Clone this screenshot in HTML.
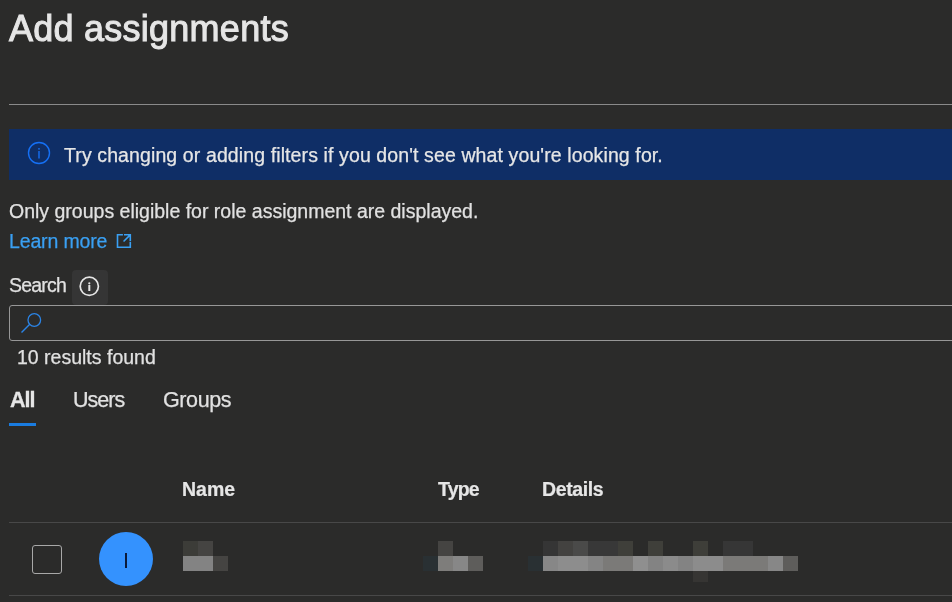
<!DOCTYPE html>
<html><head><meta charset="utf-8">
<style>
html,body{margin:0;padding:0;}
body{width:952px;height:602px;overflow:hidden;background:#2b2b2a;position:relative;font-family:"Liberation Sans",sans-serif;color:#e1e1e1;}
.a{position:absolute;white-space:nowrap;line-height:1;}
.t{font-size:36px;color:#e6e6e6;-webkit-text-stroke:1px #e6e6e6;letter-spacing:0.25px;}

.line{position:absolute;height:1px;left:9px;right:0;}
.banner{position:absolute;left:9px;right:0;top:129px;height:51px;background:#0f2e66;}
.txt{font-size:19.5px;-webkit-text-stroke:0.25px currentColor;}
.a{will-change:transform;}
.a.sb{font-weight:bold;-webkit-text-stroke:0.2px currentColor;}
.blk{position:absolute;width:15px;height:15px;}
</style></head><body>
<div class="a t" id="title" style="left:9px;top:11px;">Add assignments</div>
<div class="line" style="top:104px;background:#8a8a8a;"></div>
<div class="banner"></div>
<svg class="a" style="left:27px;top:141px" width="24" height="24" viewBox="0 0 24 24">
<circle cx="12" cy="12" r="10.5" fill="none" stroke="#1570f5" stroke-width="1.4"/>
<rect x="11.3" y="10" width="1.4" height="7.5" fill="#1570f5"/>
<circle cx="12" cy="7.8" r="0.9" fill="#1570f5"/>
</svg>
<div class="a txt" id="bantxt" style="left:64px;top:146px;letter-spacing:0.11px;color:#e6e6e6;">Try changing or adding filters if you don't see what you're looking for.</div>
<div class="a txt" id="only" style="left:9px;top:202px;">Only groups eligible for role assignment are displayed.</div>
<div class="a txt" id="learn" style="left:9px;top:232px;letter-spacing:-0.15px;color:#3aa0f3;">Learn more</div>
<svg class="a" style="left:116px;top:233px" width="16" height="16" viewBox="0 0 16 16">
<path d="M6.9 1.8H1.5V14.2H14.3V8.8" fill="none" stroke="#3aa0f3" stroke-width="1.6"/>
<path d="M8 1V2.6H12.4L7 8L8.1 9.1L13.5 3.7V8H15.1V1Z" fill="#3aa0f3"/>
</svg>
<div class="a txt" id="search" style="left:9px;top:276px;letter-spacing:-0.8px;">Search</div>
<div class="a" style="left:72px;top:270px;width:36px;height:35px;background:#353535;border-radius:4px;"></div>
<svg class="a" style="left:78px;top:275px" width="22" height="22" viewBox="0 0 22 22">
<circle cx="11.3" cy="11.3" r="9.1" fill="none" stroke="#e6e6e6" stroke-width="1.7"/>
<rect x="10.3" y="10" width="2" height="6" fill="#e6e6e6"/>
<circle cx="11.3" cy="8.3" r="1.1" fill="#e6e6e6"/>
</svg>
<div class="a" style="left:9px;top:305px;width:960px;height:34px;border:1px solid #979797;border-radius:3px;"></div>
<svg class="a" style="left:18px;top:310px" width="26" height="26" viewBox="0 0 26 26">
<circle cx="16.3" cy="10" r="6.3" fill="none" stroke="#2b84e6" stroke-width="1.3"/>
<path d="M12 14L3.5 22.5" stroke="#2b84e6" stroke-width="1.4"/>
</svg>
<div class="a txt" id="res" style="left:17px;top:348px;">10 results found</div>
<div class="a" id="all" style="left:10px;top:390px;font-size:21.5px;font-weight:bold;letter-spacing:-1px;-webkit-text-stroke:0.3px #e6e6e6;color:#e6e6e6;">All</div>
<div class="a" id="users" style="-webkit-text-stroke:0.25px #e1e1e1;left:73px;top:390px;font-size:21.5px;letter-spacing:-1px;color:#e1e1e1;">Users</div>
<div class="a" id="groups" style="-webkit-text-stroke:0.25px #e1e1e1;left:163px;top:390px;font-size:21.5px;letter-spacing:-0.4px;color:#e1e1e1;">Groups</div>
<div class="a" style="left:9px;top:423px;width:27px;height:3px;background:#1a7ce0;"></div>
<div class="a txt sb" id="hname" style="left:182px;top:480px;color:#e6e6e6;">Name</div>
<div class="a txt sb" id="htype" style="left:438px;top:480px;letter-spacing:-0.8px;color:#e6e6e6;">Type</div>
<div class="a txt sb" id="hdet" style="left:542px;top:480px;letter-spacing:-0.4px;color:#e6e6e6;">Details</div>
<div class="line" style="top:522px;background:#484848;"></div>
<div class="a" style="left:32px;top:545px;width:30px;height:29px;box-sizing:border-box;border:1.5px solid #a8a8a8;border-radius:3px;"></div>
<div class="a" style="left:99px;top:532px;width:54px;height:54px;border-radius:50%;background:#3492fe;"></div>
<div class="a" style="left:125px;top:553px;width:2px;height:15px;background:#0a1a3a;"></div>
<div id="blocks">
<div class="blk" style="left:183px;top:541px;height:15px;background:#3c3c38"></div>
<div class="blk" style="left:198px;top:541px;height:15px;background:#454442"></div>
<div class="blk" style="left:438px;top:541px;height:15px;background:#454442"></div>
<div class="blk" style="left:543px;top:541px;height:15px;background:#353535"></div>
<div class="blk" style="left:558px;top:541px;height:15px;background:#434240"></div>
<div class="blk" style="left:573px;top:541px;height:15px;background:#4a4a49"></div>
<div class="blk" style="left:588px;top:541px;height:15px;background:#383838"></div>
<div class="blk" style="left:603px;top:541px;height:15px;background:#383838"></div>
<div class="blk" style="left:618px;top:541px;height:15px;background:#3f3f3a"></div>
<div class="blk" style="left:648px;top:541px;height:15px;background:#3f3f3a"></div>
<div class="blk" style="left:693px;top:541px;height:15px;background:#3e3e39"></div>
<div class="blk" style="left:723px;top:541px;height:15px;background:#363636"></div>
<div class="blk" style="left:738px;top:541px;height:15px;background:#363636"></div>
<div class="blk" style="left:183px;top:556px;height:15px;background:#838383"></div>
<div class="blk" style="left:198px;top:556px;height:15px;background:#838383"></div>
<div class="blk" style="left:213px;top:556px;height:15px;background:#454442"></div>
<div class="blk" style="left:423px;top:556px;height:15px;background:#293033"></div>
<div class="blk" style="left:438px;top:556px;height:15px;background:#7e7d7b"></div>
<div class="blk" style="left:453px;top:556px;height:15px;background:#878787"></div>
<div class="blk" style="left:468px;top:556px;height:15px;background:#5e5d5b"></div>
<div class="blk" style="left:528px;top:556px;height:15px;background:#293033"></div>
<div class="blk" style="left:543px;top:556px;height:15px;background:#878787"></div>
<div class="blk" style="left:558px;top:556px;height:15px;background:#8d8d8d"></div>
<div class="blk" style="left:573px;top:556px;height:15px;background:#8d8d8d"></div>
<div class="blk" style="left:588px;top:556px;height:15px;background:#848484"></div>
<div class="blk" style="left:603px;top:556px;height:15px;background:#7b7a78"></div>
<div class="blk" style="left:618px;top:556px;height:15px;background:#7b7a78"></div>
<div class="blk" style="left:633px;top:556px;height:15px;background:#8f8f8f"></div>
<div class="blk" style="left:648px;top:556px;height:15px;background:#838383"></div>
<div class="blk" style="left:663px;top:556px;height:15px;background:#8b8b8b"></div>
<div class="blk" style="left:678px;top:556px;height:15px;background:#838383"></div>
<div class="blk" style="left:693px;top:556px;height:15px;background:#8c8c8c"></div>
<div class="blk" style="left:708px;top:556px;height:15px;background:#8c8c8c"></div>
<div class="blk" style="left:723px;top:556px;height:15px;background:#7b7a78"></div>
<div class="blk" style="left:738px;top:556px;height:15px;background:#7b7a78"></div>
<div class="blk" style="left:753px;top:556px;height:15px;background:#7b7a78"></div>
<div class="blk" style="left:768px;top:556px;height:15px;background:#878787"></div>
<div class="blk" style="left:783px;top:556px;height:15px;background:#5e5d5b"></div>
<div class="blk" style="left:693px;top:571px;height:11px;background:#363533"></div>
</div>
<div class="line" style="top:595px;background:#484848;"></div>
</body></html>
